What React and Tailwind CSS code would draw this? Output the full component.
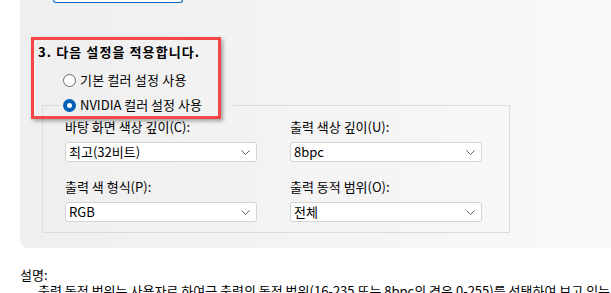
import React from "react";

function Chevron() {
  return (
    <svg width="9" height="5" viewBox="0 0 9 5" className="shrink-0">
      <polyline points="0.5,0.5 4.5,4.5 8.5,0.5" fill="none" stroke="#5f5f5f" strokeWidth="1" />
    </svg>
  );
}

function Select({ value }) {
  return (
    <div className="mt-[5px] h-[20px] w-[192px] flex items-center justify-between pl-[3px] pr-[6px] bg-white border border-[#d4d4d4] rounded-[3px] leading-[18px]">
      <span>{value}</span>
      <Chevron />
    </div>
  );
}

function Radio({ checked }) {
  if (checked) {
    return (
      <span className="w-[13px] h-[13px] rounded-full bg-[#005fb8] flex items-center justify-center shrink-0">
        <span className="w-[5px] h-[5px] rounded-full bg-white" />
      </span>
    );
  }
  return <span className="w-[13px] h-[13px] rounded-full border border-[#6a6a6a] bg-white shrink-0" />;
}

export default function App() {
  return (
    <div className="relative w-[611px] h-[293px] overflow-hidden bg-white text-[13px] text-black font-['Noto_Sans_CJK_KR','Noto_Sans',sans-serif]">
      <div className="ml-[20px] h-[248px] rounded-bl-[8px] bg-linear-to-r from-[#efefef] to-[#f9f9f9] flex flex-col">
        <div className="ml-[33px] w-[130px] h-[3px] border-b border-x border-[#0067c0] rounded-b-[4px] bg-[#fbfbfb]" />
        <div className="mt-[39px] ml-[18px] font-bold tracking-[1.1px] leading-[20px]">3. 다음 설정을 적용합니다.</div>
        <div className="mt-[8px] ml-[43px] h-[20px] flex items-center gap-[4px] leading-[20px]">
          <Radio />
          <span className="tracking-[0.2px]">기본 컬러 설정 사용</span>
        </div>
        <fieldset className="mt-[5px] ml-[22px] w-[468px] border border-[#dcdcdc] px-0 pb-[10px]">
          <legend className="ml-[18px] w-[172px] h-[20px] pl-[2px] leading-[20px]">
            <span className="flex items-center gap-[4px] h-[20px]">
              <Radio checked />
              <span>NVIDIA 컬러 설정 사용</span>
            </span>
          </legend>
          <div className="pl-[22px] pt-[2px] grid grid-cols-[192px_192px] gap-x-[33px] leading-[20px]">
            <div className="flex flex-col">
              <span>바탕 화면 색상 깊이(C):</span>
              <Select value="최고(32비트)" />
            </div>
            <div className="flex flex-col">
              <span>출력 색상 깊이(U):</span>
              <Select value="8bpc" />
            </div>
            <div className="flex flex-col mt-[15px]">
              <span>출력 색 형식(P):</span>
              <Select value="RGB" />
            </div>
            <div className="flex flex-col mt-[15px]">
              <span>출력 동적 범위(O):</span>
              <Select value="전체" />
            </div>
          </div>
        </fieldset>
      </div>
      <div className="mt-[19px] ml-[20px] leading-[16px]">설명:</div>
      <div className="ml-[38px] leading-[16px] whitespace-nowrap">
        출력 동적 범위는 사용자로 하여금 출력의 동적 범위(16-235 또는 8bpc의 경우 0-255)를 선택하여 보고 있는 콘텐츠 유형에 맞출 수 있도록 합니다.
      </div>
      <div className="absolute left-[31px] top-[37px] w-[190px] h-[82px] border-[3px] border-[#f44848] shadow-[2px_2px_4px_rgba(0,0,0,0.35)]" />
    </div>
  );
}
